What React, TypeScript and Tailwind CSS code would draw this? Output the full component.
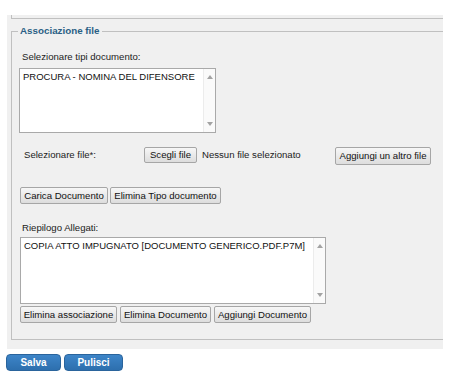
import React from "react";

const font = { fontFamily: '"Liberation Sans", Arial, sans-serif' };

// small gray button, classic browser look
const Btn = ({ label, w, h = 17, className = "" }: { label: string; w: number; h?: number; className?: string }) => (
  <button
    className={`shrink-0 flex items-center justify-center rounded-[2px] border border-[#a6a6a6] bg-gradient-to-b from-[#f7f7f7] to-[#dddddd] text-[9.6px] leading-none text-[#111] ${className}`}
    style={{ width: w, height: h }}
  >
    {label}
  </button>
);

const Arrow = ({ up }: { up?: boolean }) => (
  <svg width="6" height="4" viewBox="0 0 6 4">
    <polygon points={up ? "3,0 6,4 0,4" : "0,0 6,0 3,4"} fill="#a3a3a3" />
  </svg>
);

const ListBox = ({ text, w, h }: { text: string; w: number; h: number }) => (
  <div className="flex border border-[#a9a9a9] bg-white" style={{ width: w, height: h }}>
    <div className="flex-1 min-w-0 pl-[3px] pt-[2px] text-[9.5px] leading-[12px] text-[#111] whitespace-nowrap">
      {text}
    </div>
    <div className="w-[12px] shrink-0 flex flex-col items-center justify-between py-[6px] border-l border-[#ececec] bg-[#fafafa]">
      <Arrow up />
      <Arrow />
    </div>
  </div>
);

export default function App() {
  return (
    <div className="w-[453px] h-[382px] bg-white overflow-hidden" style={font}>
      {/* gray panel */}
      <div className="ml-[7px] mt-[15px] w-[436px] bg-[#f0f0f0] pl-[4px] pb-[9px] overflow-hidden">
        {/* bottom of previous fieldset */}
        <div className="h-[4px] border-l border-b border-[#c0c0c0]" />

        <fieldset className="mt-[6px] border border-r-0 border-[#c0c0c0] pb-[16px]">
          <legend className="ml-[6px] px-[2px] text-[9.8px] leading-[12px] font-bold text-[#2a5f85]">
            Associazione file
          </legend>

          <div className="ml-[10px] mt-[14px] text-[9.6px] leading-[12px] text-[#222]">
            Selezionare tipi documento:
          </div>
          <div className="ml-[7px] mt-[5px]">
            <ListBox text="PROCURA - NOMINA DEL DIFENSORE" w={197} h={65} />
          </div>

          <div className="mt-[12px] flex items-center h-[20px]">
            <div className="ml-[12px] w-[120px] text-[9.6px] text-[#222]">Selezionare file*:</div>
            <Btn label="Scegli file" w={53} h={16} />
            <span className="ml-[5px] text-[9.6px] text-[#222]">Nessun file selezionato</span>
            <Btn label="Aggiungi un altro file" w={96} h={18} className="ml-auto mr-[12px] mt-[2px]" />
          </div>

          <div className="mt-[22px] ml-[8px] flex gap-[2px]">
            <Btn label="Carica Documento" w={88} />
            <Btn label="Elimina Tipo documento" w={111} />
          </div>

          <div className="ml-[10px] mt-[18px] text-[9.6px] leading-[12px] text-[#222]">Riepilogo Allegati:</div>
          <div className="ml-[8px] mt-[3px]">
            <ListBox text="COPIA ATTO IMPUGNATO [DOCUMENTO GENERICO.PDF.P7M]" w={306} h={67} />
          </div>

          <div className="mt-[2px] ml-[8px] flex gap-[3px]">
            <Btn label="Elimina associazione" w={97} />
            <Btn label="Elimina Documento" w={91} />
            <Btn label="Aggiungi Documento" w={97} />
          </div>
        </fieldset>
      </div>

      <div className="ml-[6px] mt-[5px] flex gap-[3px]">
        <button className="w-[55px] h-[17px] rounded-[4px] border border-[#2a649c] bg-gradient-to-b from-[#3d85c8] to-[#2d6fae] text-white font-bold text-[10px] leading-none">
          Salva
        </button>
        <button className="w-[59px] h-[17px] rounded-[4px] border border-[#2a649c] bg-gradient-to-b from-[#3d85c8] to-[#2d6fae] text-white font-bold text-[10px] leading-none">
          Pulisci
        </button>
      </div>
    </div>
  );
}
